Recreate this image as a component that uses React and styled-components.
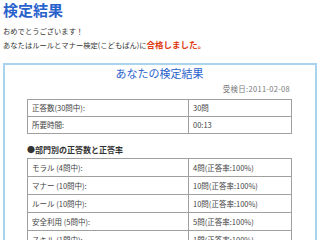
import React from 'react'
import styled, { createGlobalStyle } from 'styled-components'

const GlobalStyle = createGlobalStyle`
    body {
        margin: 0;
        background: #ffffff;
        font-family: "Noto Sans CJK JP", "Liberation Sans", sans-serif;
        color: #333333;
    }
`

const Page = styled.div`
    padding: 1px 3px 0;
`

const Title = styled.h1`
    margin: 0;
    font-size: 15px;
    line-height: 17px;
    font-weight: bold;
    color: #2a62cc;
`

const Message = styled.p`
    margin: 7px 0 0;
    font-size: 7.3px;
    line-height: 13px;
    color: #333333;
`

const Passed = styled.strong`
    color: #e03a10;
    font-size: 8.5px;
`

const ResultBox = styled.div`
    margin-top: 11px;
    border: 2px solid #a8d4f0;
    border-bottom: none;
    padding: 0 23px 10px 22px;
    height: 200px;
`

const BoxTitle = styled.h2`
    margin: 1px 0 0;
    text-align: center;
    font-size: 11px;
    line-height: 14px;
    font-weight: normal;
    color: #2a62cc;
`

const ExamDate = styled.div`
    margin-top: 3px;
    padding-right: 2px;
    text-align: right;
    font-size: 7.5px;
    line-height: 12px;
    letter-spacing: 0.3px;
    color: #777777;
`

const Table = styled.table`
    width: 100%;
    border-collapse: collapse;
    border: 1px solid #999999;
    margin-top: ${p => p.$top}px;
`

const Row = styled.tr`
    height: ${p => p.$h}px;
`

const Cell = styled.td`
    border: 1px solid #a0a0a0;
    padding: 0 0 0 4px;
    font-size: 7.5px;
    line-height: 10px;
    color: #444444;
    width: ${p => p.$w || 'auto'};
`

const Section = styled.div`
    margin-top: 10px;
    font-size: 8px;
    line-height: 12px;
    font-weight: bold;
    color: #333333;
`

const summary = [
    ['正答数(30問中):', '30問'],
    ['所要時間:', '00:13'],
]

const byCategory = [
    ['モラル (4問中):', '4問(正答率:100%)'],
    ['マナー (10問中):', '10問(正答率:100%)'],
    ['ルール (10問中):', '10問(正答率:100%)'],
    ['安全利用 (5問中):', '5問(正答率:100%)'],
    ['スキル (1問中):', '1問(正答率:100%)'],
]

const App = () => (
    <Page>
        <GlobalStyle />
        <Title>検定結果</Title>
        <Message>
            おめでとうございます！<br />
            あなたはルールとマナー検定(こどもばん)に<Passed>合格しました。</Passed>
        </Message>
        <ResultBox>
            <BoxTitle>あなたの検定結果</BoxTitle>
            <ExamDate>受検日:2011-02-08</ExamDate>
            <Table $top={4}>
                <tbody>
                    {summary.map(([k, v]) => (
                        <Row key={k} $h={17}>
                            <Cell $w="61%">{k}</Cell>
                            <Cell>{v}</Cell>
                        </Row>
                    ))}
                </tbody>
            </Table>
            <Section>●部門別の正答数と正答率</Section>
            <Table $top={2}>
                <tbody>
                    {byCategory.map(([k, v]) => (
                        <Row key={k} $h={18}>
                            <Cell $w="61%">{k}</Cell>
                            <Cell>{v}</Cell>
                        </Row>
                    ))}
                </tbody>
            </Table>
        </ResultBox>
    </Page>
)

export default App
